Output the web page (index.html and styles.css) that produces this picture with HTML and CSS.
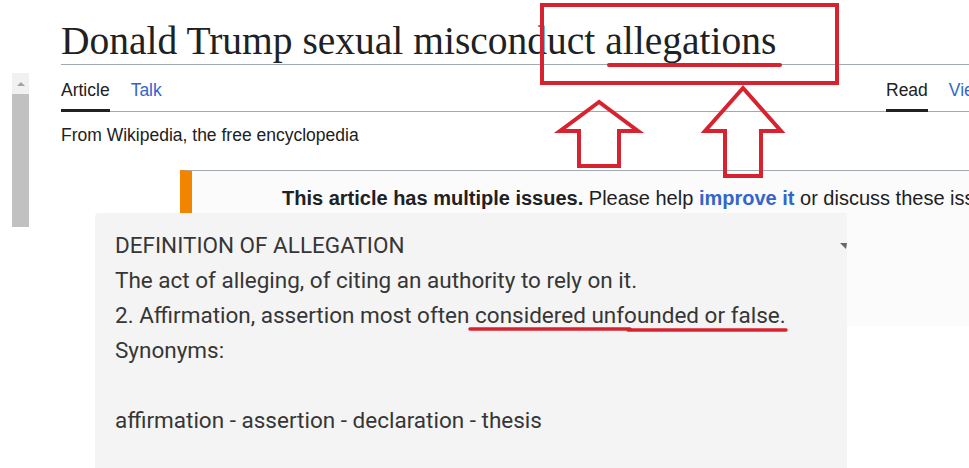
FILE: index.html
```html
<!DOCTYPE html>
<html lang="en">
<head>
    <meta charset="UTF-8">
    <meta name="viewport" content="width=device-width, initial-scale=1.0">
    <title>Donald Trump sexual misconduct allegations</title>
    <link rel="stylesheet" href="styles.css">
</head>
<body>
    <div class="screen">
        <div class="rail">
            <div class="scrollbar">
                <div class="scroll-up"><span class="scroll-arrow"></span></div>
                <div class="scroll-thumb"></div>
            </div>
        </div>

        <div class="page">
            <h1 class="title">Donald Trump sexual misconduct allegations</h1>
            <div class="tabs">
                <nav class="tab-group">
                    <a class="tab active">Article</a>
                    <a class="tab">Talk</a>
                </nav>
                <nav class="tab-group">
                    <a class="tab active">Read</a>
                    <a class="tab">View source</a>
                    <a class="tab">View history</a>
                </nav>
            </div>
            <div class="sitesub">From Wikipedia, the free encyclopedia</div>
            <div class="ambox">
                <p><b>This article has multiple issues.</b> Please help <a class="link">improve it</a> or discuss these issues on the talk page.</p>
            </div>
        </div>

        <div class="definition">
            <p>DEFINITION OF ALLEGATION</p>
            <p>The act of alleging, of citing an authority to rely on it.</p>
            <p>2. Affirmation, assertion most often considered unfounded or false.</p>
            <p>Synonyms:</p>
            <p>&nbsp;</p>
            <p>affirmation - assertion - declaration - thesis</p>
        </div>

        <svg class="marks" width="969" height="468" viewBox="0 0 969 468">
            <rect x="542" y="5" width="295" height="78" fill="none" stroke="#d7232f" stroke-width="4"/>
            <line x1="609" y1="65" x2="780" y2="65" stroke="#d7232f" stroke-width="4" stroke-linecap="round"/>
            <polygon points="599,102 560,131 579,131 579,166 619,166 619,131 638,131" fill="none" stroke="#d7232f" stroke-width="4"/>
            <polygon points="743,88 705,131 725,131 725,176 761,176 761,131 781,131" fill="none" stroke="#d7232f" stroke-width="4"/>
            <line x1="470" y1="329" x2="630" y2="329" stroke="#d7232f" stroke-width="3.5" stroke-linecap="round"/>
            <line x1="628" y1="330" x2="786" y2="330" stroke="#d7232f" stroke-width="3.5" stroke-linecap="round"/>
            <polygon points="840,243 847,243 846,249" fill="#666"/>
        </svg>
    </div>
</body>
</html>
```

FILE: styles.css
```css
body {
    margin: 0;
    padding: 0;
    background: #ffffff;
    font-family: 'Liberation Sans', Arial, sans-serif;
    color: #202122;
    overflow: hidden;
}
.screen {
    position: relative;
    display: flex;
    width: 969px;
    height: 468px;
    overflow: hidden;
}
.rail {
    flex: none;
    width: 61px;
}
.scrollbar {
    margin: 73px 0 0 12px;
    width: 17px;
    height: 154px;
    display: flex;
    flex-direction: column;
}
.scroll-up {
    height: 21px;
    background: #f1f1f1;
    display: flex;
    justify-content: center;
    align-items: center;
}
.scroll-arrow {
    width: 0;
    height: 0;
    border-left: 4px solid transparent;
    border-right: 4px solid transparent;
    border-bottom: 4px solid #a3a3a3;
}
.scroll-thumb {
    flex: 1;
    background: #c1c1c1;
}
.page {
    flex: none;
    width: 1100px;
}
.title {
    margin: 0;
    padding-top: 18px;
    font-family: 'Liberation Serif', 'Times New Roman', serif;
    font-weight: normal;
    font-size: 39.5px;
    line-height: 46px;
    color: #202122;
    border-bottom: 1px solid #a2a9b1;
    white-space: nowrap;
}
.tabs {
    display: grid;
    grid-template-columns: 825px auto;
    align-items: end;
    height: 46px;
    border-bottom: 1px solid #a2a9b1;
}
.tab-group {
    display: flex;
    gap: 21px;
    margin-bottom: -1px;
}
.tab {
    font-size: 17.5px;
    line-height: 20px;
    padding-bottom: 9px;
    border-bottom: 3px solid transparent;
    color: #3366cc;
    white-space: nowrap;
}
.tab.active {
    color: #202122;
    border-bottom-color: #202122;
}
.sitesub {
    margin-top: 13px;
    font-size: 17.5px;
    line-height: 20px;
    color: #202122;
}
.ambox {
    margin: 25px 0 0 119px;
    height: 140px;
    background: #fbfbfb;
    border-top: 1px solid #a2a9b1;
    border-left: 12px solid #f28500;
    padding: 15px 0 0 90px;
}
.ambox p {
    margin: 0;
    font-size: 20px;
    line-height: 24px;
    white-space: nowrap;
}
.ambox .link {
    color: #3366cc;
    font-weight: bold;
}
.definition {
    position: absolute;
    left: 95px;
    top: 213px;
    width: 752px;
    height: 270px;
    box-sizing: border-box;
    padding: 15px 20px;
    background: #f4f4f4;
    border-radius: 4px 0 0 0;
    font-family: Roboto, 'Liberation Sans', sans-serif;
    font-size: 22.5px;
    line-height: 35px;
    color: #363636;
}
.definition p {
    margin: 0;
    white-space: nowrap;
}
.marks {
    position: absolute;
    top: 0;
    left: 0;
    pointer-events: none;
}
```
